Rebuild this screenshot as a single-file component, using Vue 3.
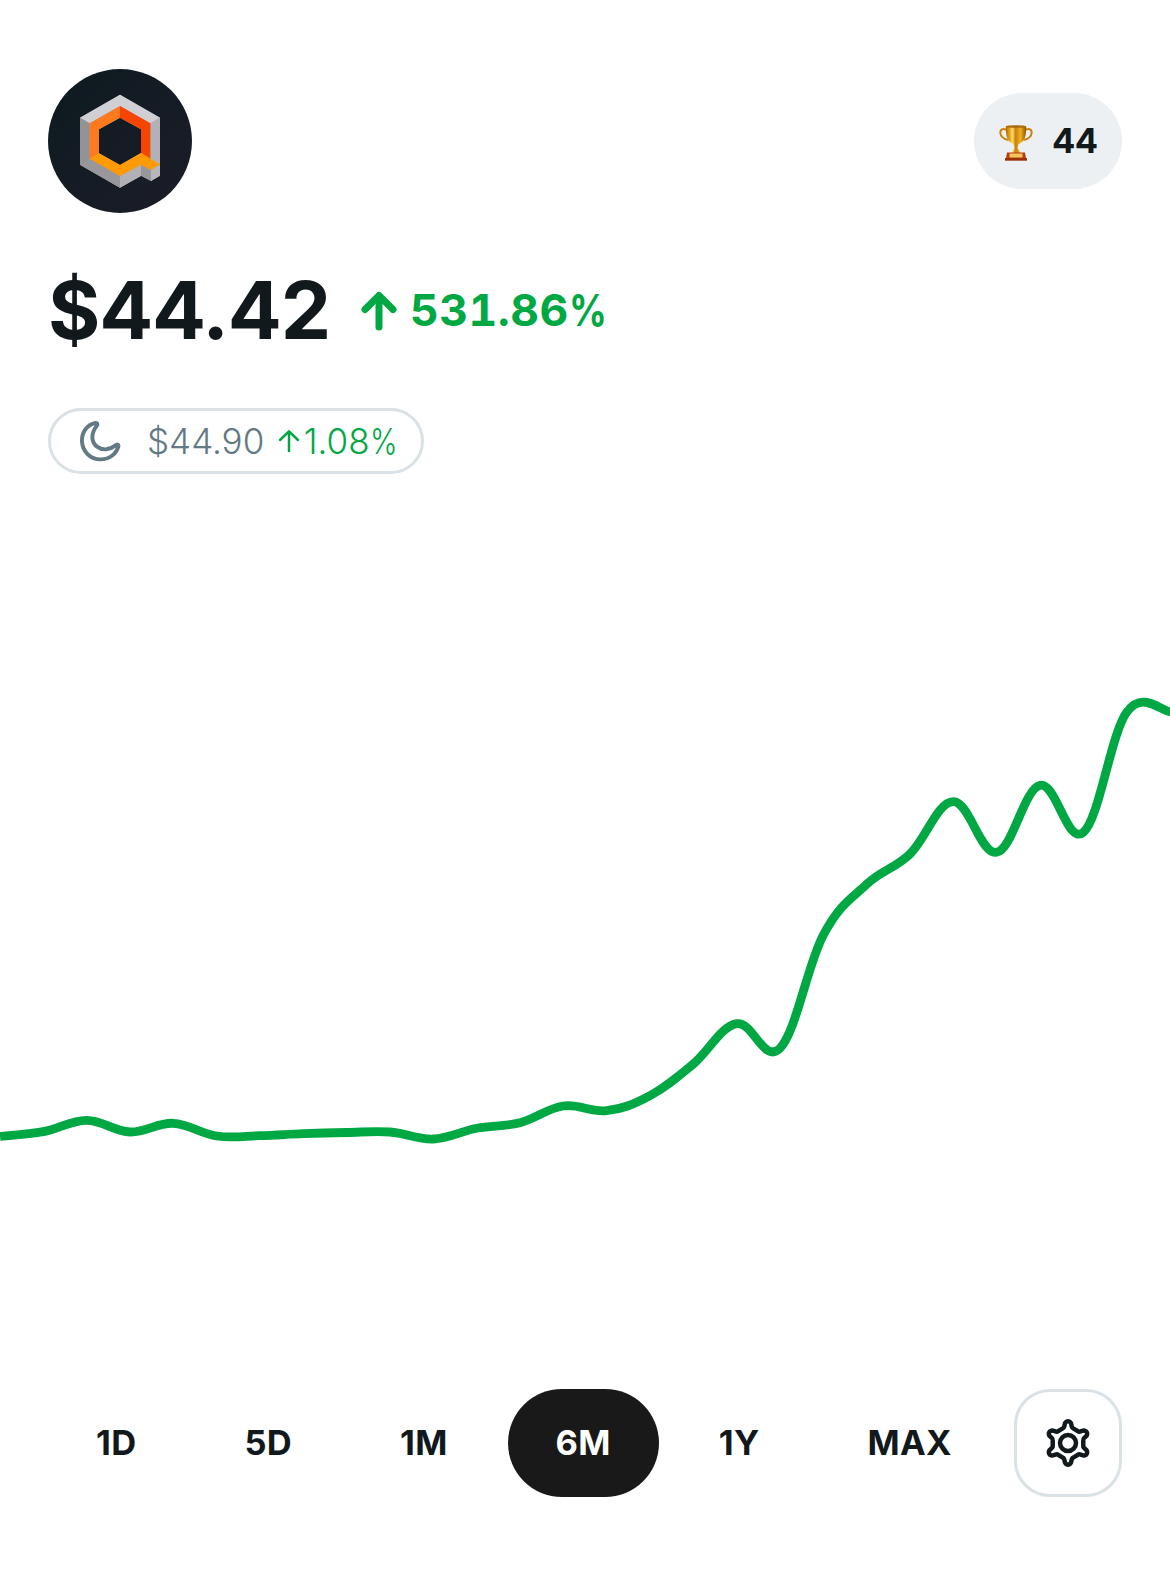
<script setup>
import { ref } from 'vue'

const ranges = ['1D', '5D', '1M', '6M', '1Y', 'MAX']
const active = ref('6M')

const prices = [
  1136.3, 1131.7, 1120.3, 1132, 1123.3, 1136, 1135.7, 1133.7, 1132.5, 1132,
  1139, 1128.3, 1122.7, 1106, 1110.7, 1095.7, 1064, 1023.7, 1048.2, 935,
  884.3, 854, 801.7, 852.3, 785.3, 832.3, 712.3, 711.7
]

// Smooth curve through evenly spaced samples
function curve(values) {
  const step = 1170 / (values.length - 1)
  const smooth = 0.186
  const clamp = (i) => Math.max(0, Math.min(values.length - 1, i))
  const at = (i) => values[clamp(i)] - 660
  const x = (i) => clamp(i) * step
  let d = `M0 ${at(0)}`
  for (let i = 0; i < values.length - 1; i++) {
    const x1 = x(i) + (x(i + 1) - x(i - 1)) * smooth
    const y1 = at(i) + (at(i + 1) - at(i - 1)) * smooth
    const x2 = x(i + 1) - (x(i + 2) - x(i)) * smooth
    const y2 = at(i + 1) - (at(i + 2) - at(i)) * smooth
    d += `C${x1} ${y1} ${x2} ${y2} ${x(i + 1)} ${at(i + 1)}`
  }
  return d
}
const line = curve(prices)

function gearPath() {
  const pts = [[-17, -43], [-12, -45], [-11, -50], [-10, -55], [10, -55], [11, -50], [12, -45], [17, -43]]
  let d = ''
  for (let k = 0; k < 6; k++) {
    const a = (k * Math.PI) / 3
    const p = pts.map(([x, y]) =>
      `${(x * Math.cos(a) - y * Math.sin(a)).toFixed(2)} ${(x * Math.sin(a) + y * Math.cos(a)).toFixed(2)}`)
    d += `${k ? 'L' : 'M'}${p[0]}Q${p[1]} ${p[2]}L${p[3]}A10 10 0 0 1 ${p[4]}L${p[5]}Q${p[6]} ${p[7]}`
  }
  return d + 'Z'
}
const gear = gearPath()
</script>

<template>
  <main class="card">
    <header class="top">
      <svg class="logo" viewBox="24 27 432 432">
        <defs>
          <linearGradient id="disc" x1="0" y1="0" x2="1" y2="1">
            <stop offset="0" stop-color="#0d1a1f" />
            <stop offset="1" stop-color="#1c1d29" />
          </linearGradient>
        </defs>
        <circle cx="240" cy="243" r="216" fill="url(#disc)" />
        <path d="M120 173L240 104L360 173V347L333 363L303 347L240 383L120 314ZM177 208V280L240 315L303 279V208L240 173Z" fill="#a5a5a9" fill-rule="evenodd" />
        <path d="M120 173L240 104L360 173L331 190L240 138L149 190Z" fill="#d0d0d4" />
        <path d="M120 173L149 190V296L240 348V383L120 314Z" fill="#929297" />
        <path d="M149 296L240 348V383L120 314Z" fill="#98989c" />
        <path d="M360 173L331 190V300L360 314Z" fill="#b2b2b6" />
        <path d="M240 348L303 313V348L240 383Z" fill="#b2b2b6" />
        <path d="M303 313L333 330V363L303 347Z" fill="#98989c" />
        <path d="M333 330L360 314V347L333 363Z" fill="#b8b8bc" />
        <path d="M149 190L240 138V173L177 208V280L149 296Z" fill="#ff7a1c" />
        <path d="M240 138L331 190V296L303 280V208L240 173Z" fill="#f54500" />
        <path d="M149 296L177 280L240 315L303 279L360 313L331 330L303 314L240 348Z" fill="#ff9a05" />
      </svg>
      <div class="score">
        <svg class="trophy" viewBox="0 0 34 36">
          <defs>
            <linearGradient id="gold" x1="0" x2="1">
              <stop offset="0" stop-color="#b06400" />
              <stop offset=".2" stop-color="#e8a818" />
              <stop offset=".32" stop-color="#ffe070" />
              <stop offset=".48" stop-color="#c98008" />
              <stop offset=".72" stop-color="#f0b020" />
              <stop offset="1" stop-color="#945000" />
            </linearGradient>
          </defs>
          <path d="M8.500 5.500C5 3 1.200 4 1.300 7.600C1.500 11 4.600 14.200 9.500 15M25.500 5.500C29 3 32.800 4 32.700 7.600C32.500 11 29.400 14.200 24.500 15" fill="none" stroke="#c98210" stroke-width="2" />
          <path d="M6.800 1.300H27.200C27.400 10 26 17 19.500 19L18.500 23L21.500 28H12.500L15.500 23L14.500 19C8 17 6.600 10 6.800 1.300Z" fill="url(#gold)" />
          <ellipse cx="17" cy="1.500" rx="10.200" ry="1.300" fill="#a86a10" />
          <path d="M8 27.500H26L27 33H7Z" fill="#b5400f" />
          <path d="M10.500 28.500H23.500V32.500H10.500Z" fill="#f2c65a" />
          <path d="M6 33H28V35.700H6Z" fill="#9c2f0c" />
        </svg>
        <span>44</span>
      </div>
    </header>

    <section class="quote">
      <span class="price">$44.42</span>
      <svg class="arrow" viewBox="0 0 36 40">
        <path d="M4 18.500L18 4.500L32 18.500M18 5V36" />
      </svg>
      <span class="change">531.86<span class="percent">%</span></span>
    </section>

    <section class="after">
      <svg class="moon" viewBox="113 56 134 134">
        <path d="M166 68C140 73 125 96 125 122C126 155 150 179 182 179C208 179 230 163 236 139C237 133 231 132 226 137C210 150 188 153 172 141C154 128 150 103 170 77C174 71 171 67 166 68Z" />
      </svg>
      <span class="after-price">$44.90</span>
      <svg class="small-arrow" viewBox="0 0 22 24">
        <path d="M2 11L11 2.300L20 11M11 2.500V22" />
      </svg>
      <span class="after-change">1.08<span class="percent">%</span></span>
    </section>

    <svg class="chart" viewBox="0 0 1170 500">
      <path :d="line" />
    </svg>

    <nav class="ranges">
      <button v-for="r in ranges" :key="r" :class="['range', { active: r === active }]" @click="active = r">{{ r }}</button>
      <button class="settings" aria-label="Settings">
        <svg viewBox="-75 -75 150 150">
          <path :d="gear" />
          <circle r="24" />
        </svg>
      </button>
    </nav>
  </main>
</template>

<style>
body { margin: 0; background: #fff; }
</style>

<style scoped>
.card {
  box-sizing: border-box;
  width: 1170px;
  height: 1575px;
  padding-top: 69px;
  background: #fff;
  color: #12191c;
  font-family: Inter, "Liberation Sans", sans-serif;
  display: flex;
  flex-direction: column;
  overflow: hidden;
}
.top {
  height: 144px;
  padding: 0 48px;
  display: flex;
  align-items: center;
  justify-content: space-between;
}
.logo { width: 144px; height: 144px; }
.score {
  box-sizing: border-box;
  width: 148px;
  height: 96px;
  padding: 0 0 1px 25px;
  border-radius: 48px;
  background: #ecf0f3;
  display: flex;
  align-items: center;
  gap: 19px;
  font-size: 34.5px;
  font-weight: 680;
  letter-spacing: -0.600px;
}
.trophy { width: 34px; height: 36px; margin-top: 5px; }
.quote {
  height: 100px;
  margin-top: 47px;
  padding-left: 48px;
  display: flex;
  align-items: center;
}
.price { font-size: 80px; font-weight: 680; line-height: 100px; letter-spacing: -1.200px; }
.arrow { width: 36px; height: 40px; margin: 2px 0 0 31px; }
.arrow path, .small-arrow path {
  fill: none;
  stroke: #00a843;
  stroke-width: 7;
  stroke-linecap: round;
  stroke-linejoin: round;
}
.change {
  margin-left: 13px;
  font-size: 44.500px;
  font-weight: 660;
  font-variant-numeric: tabular-nums;
  letter-spacing: 0.500px;
  color: #00a843;
}
.percent { display: inline-block; transform: scaleX(0.84); transform-origin: left; }
.after {
  box-sizing: border-box;
  width: 376px;
  height: 66px;
  margin: 48px 0 0 48px;
  padding-left: 27px;
  border: 3px solid #dae2e6;
  border-radius: 33px;
  display: flex;
  align-items: center;
  font-size: 35px;
  font-weight: 320;
}
.moon { width: 44px; height: 44px; }
.moon path { fill: none; stroke: #627a85; stroke-width: 12; stroke-linejoin: round; }
.after-price { margin-left: 25px; color: #627a85; }
.small-arrow { width: 22px; height: 24px; margin-left: 14px; }
.small-arrow path { stroke-width: 2.500; }
.after-change { margin-left: 3.5px; color: #00a843; }
.chart { width: 1170px; height: 500px; margin-top: 186px; }
.chart path { fill: none; stroke: #00a843; stroke-width: 8.800; }
.ranges {
  margin-top: 229px;
  padding: 0 48px;
  height: 108px;
  display: flex;
  gap: 12px;
}
.range {
  height: 108px;
  padding: 0 48px 2px;
  border: 0;
  border-radius: 54px;
  background: transparent;
  color: inherit;
  font: 660 34.5px Inter, "Liberation Sans", sans-serif;
  letter-spacing: 0.300px;
}
.range.active { background: #191919; color: #fff; }
.settings {
  box-sizing: border-box;
  flex: none;
  width: 108px;
  height: 108px;
  margin-left: auto;
  padding: 0;
  border: 3px solid #dae2e6;
  border-radius: 36px;
  background: #fff;
  display: flex;
  align-items: center;
  justify-content: center;
}
.settings svg { width: 50px; height: 50px; }
.settings path, .settings circle { fill: none; stroke: #12191c; stroke-width: 13.500; stroke-linejoin: round; }
</style>
